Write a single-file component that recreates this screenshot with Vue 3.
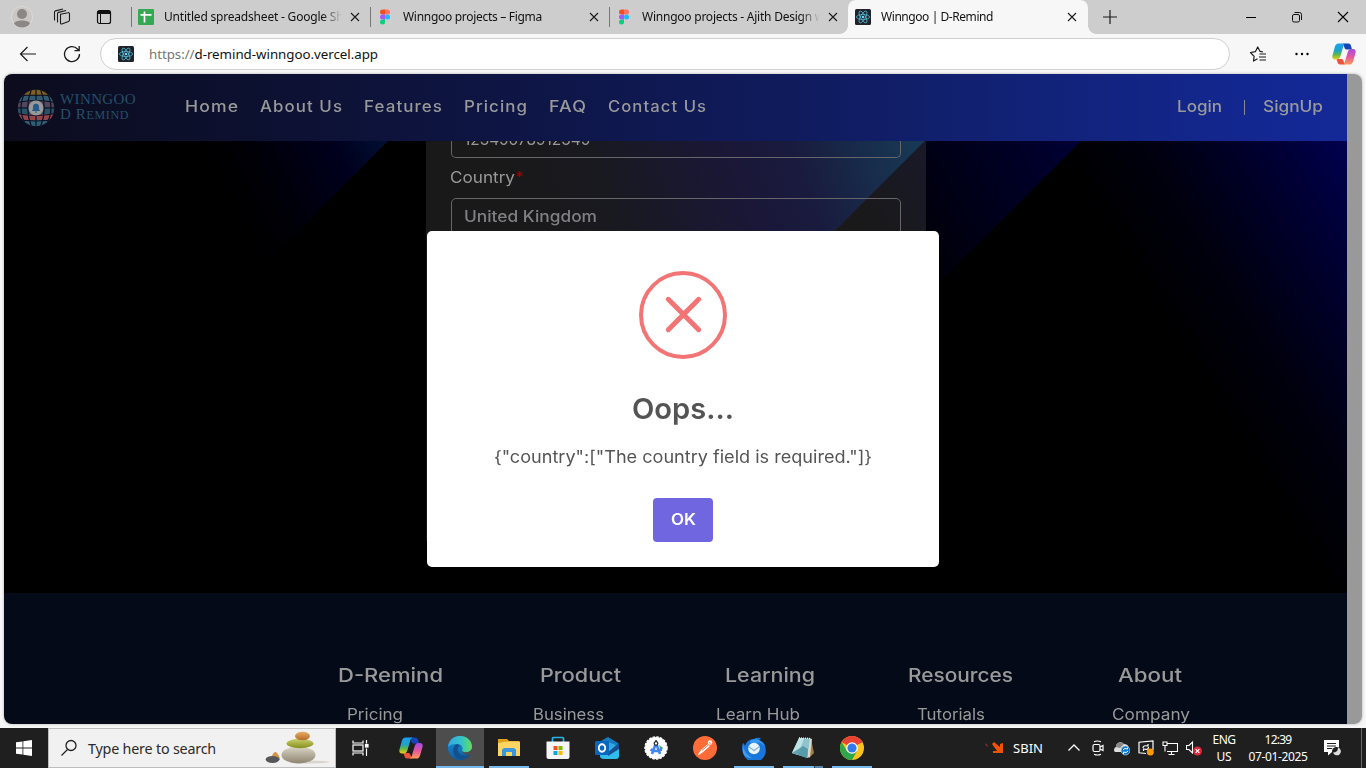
<script setup>
// Adjusts letter spacing so that a label takes the given width in pixels.
const vFit = {
  mounted(el, { value }) {
    const width = el.getBoundingClientRect().width
    const count = el.textContent.length
    el.style.letterSpacing = (value - width) / count + 'px'
  },
}

// Widens the letters themselves, keeping the spacing set in the stylesheet.
const vStretch = {
  mounted(el, { value }) {
    const spacing = parseFloat(getComputedStyle(el).letterSpacing) || 0
    const width = el.getBoundingClientRect().width - spacing
    el.style.width = value + 'px'
    el.style.transform = `scaleX(${value / width})`
  },
}

const tabs = [
  { title: 'Untitled spreadsheet - Google She', width: 186, icon: 'sheets' },
  { title: 'Winngoo projects – Figma', width: 139, icon: 'figma' },
  { title: 'Winngoo projects - Ajith Design w', width: 182, icon: 'figma' },
]

const links = [
  { text: 'Home', width: 53 },
  { text: 'About Us', width: 82 },
  { text: 'Features', width: 78 },
  { text: 'Pricing', width: 63 },
  { text: 'FAQ', width: 37 },
  { text: 'Contact Us', width: 98 },
]

const headings = [
  { text: 'D-Remind', width: 105 },
  { text: 'Product', width: 81 },
  { text: 'Learning', width: 90 },
  { text: 'Resources', width: 105 },
  { text: 'About', width: 64 },
]

const entries = [
  { text: 'Pricing', width: 56 },
  { text: 'Business', width: 71 },
  { text: 'Learn Hub', width: 84 },
  { text: 'Tutorials', width: 68 },
  { text: 'Company', width: 78 },
]
</script>

<template>
  <div class="screen">
    <svg class="defs" width="0" height="0">
      <defs>
        <linearGradient id="copA" x1="0" y1="0" x2="0" y2="1">
          <stop offset="0" stop-color="#1c9df0" /><stop offset=".45" stop-color="#1fa3c8" /><stop offset=".7" stop-color="#5fb944" /><stop offset="1" stop-color="#f3cf1d" />
        </linearGradient>
        <linearGradient id="copB" x1="0" y1="0" x2="0" y2="1">
          <stop offset="0" stop-color="#a34ce8" /><stop offset=".5" stop-color="#e5569f" /><stop offset="1" stop-color="#ff9b54" />
        </linearGradient>
        <symbol id="copilot" viewBox="0 0 24 24">
          <path d="M11 1.500h5.500c1.300 0 2 .8 2.400 2L20 7.500h-5c-1.500 0-2.200-.5-2.600-2z" fill="#1745b8" />
          <path d="M13 22.500H8c-1.400 0-2-.8-2.400-2L4.400 17H9c1.500 0 2 .5 2.500 2z" fill="#f0533c" />
          <path d="M6.500 1.500h7.200c-1.500.4-2 1.600-2.500 3.200L8.500 14c-.7 2.300-1.600 3.500-4 3.500H3C.7 17.500-.1 16 .5 13.600l2.300-8.500C3.500 2.700 4.500 1.500 6.500 1.500z" fill="url(#copA)" />
          <path d="M17.500 22.500h-7c1.500-.4 2-1.600 2.500-3.200l2.600-8.800c.7-2.400 1.600-3.500 4-3.500H21c2.300 0 3.100 1.500 2.500 3.900l-2.300 8c-.7 2.400-1.700 3.600-3.700 3.600z" fill="url(#copB)" />
        </symbol>
        <symbol id="react" viewBox="0 0 16 16">
          <rect width="16" height="16" rx="1.500" fill="#20232a" />
          <g fill="none" stroke="#53b9d6" stroke-width=".8">
            <ellipse cx="8" cy="8" rx="6.600" ry="2.500" />
            <ellipse cx="8" cy="8" rx="6.600" ry="2.500" transform="rotate(60 8 8)" />
            <ellipse cx="8" cy="8" rx="6.600" ry="2.500" transform="rotate(120 8 8)" />
          </g>
          <circle cx="8" cy="8" r="1.300" fill="#61dafb" />
        </symbol>
        <symbol id="figma" viewBox="0 0 16 16">
          <path d="M5.500.5H8v5H5.500a2.500 2.500 0 0 1 0-5z" fill="#f24e1e" />
          <path d="M8 .5h2.500a2.500 2.500 0 0 1 0 5H8z" fill="#ff7262" />
          <path d="M5.500 5.500H8v5H5.500a2.500 2.500 0 0 1 0-5z" fill="#a259ff" />
          <circle cx="10.500" cy="8" r="2.500" fill="#1abcfe" />
          <path d="M5.500 10.500H8V13a2.500 2.500 0 1 1-2.500-2.500z" fill="#0acf83" />
        </symbol>
        <symbol id="sheets" viewBox="0 0 16 16">
          <rect width="16" height="16" rx="1" fill="#34a853" />
          <path d="M2.500 5.800h11M6.500 2.500v11" stroke="#fff" stroke-width="1.700" />
        </symbol>
        <symbol id="close" viewBox="0 0 10 10">
          <path d="M1 1l8 8M9 1L1 9" stroke="#1b1b1b" stroke-width="1.100" />
        </symbol>
      </defs>
    </svg>

    <header class="tabbar">
      <div class="tools">
        <svg class="avatar" viewBox="0 0 22 22"><circle cx="11" cy="11" r="10.500" fill="#c9c6c3" stroke="#dedbd6" /><circle cx="11" cy="8" r="5" fill="#8b8785" /><path d="M3 17.500C4 13.500 18 13.500 19 17.500a10 10 0 0 1-16 0z" fill="#8b8785" /></svg>
        <svg class="spaces" viewBox="0 0 18 18" fill="none" stroke="#1b1b1b" stroke-width="1.100" stroke-linejoin="round"><path d="M7.500 6.300l7.500-1.600c.8-.2 1.500.3 1.500 1.100v6.300c0 .7-.3 1.100-1 1.300l-6.700 2.500c-.8.300-1.300-.2-1.300-.9V7.300z" /><path d="M5 14.200c-.4-.2-.5-.3-.5-.7V5.800c0-.8.300-1.200 1-1.400L13 2.500M2 12.200c-.4-.2-.5-.3-.5-.7V4.300c0-.8.300-1.200 1-1.400L10 1" /></svg>
        <svg class="vtabs" viewBox="0 0 16 16"><rect x="1.500" y="1.500" width="13" height="13" rx="2" fill="none" stroke="#111" stroke-width="1.200" /><path d="M1.500 5V3.500a2 2 0 0 1 2-2h9a2 2 0 0 1 2 2V5z" fill="#111" /><path d="M4.500 5v9" stroke="#111" /></svg>
      </div>
      <div v-for="tab in tabs" :key="tab.title" class="tab">
        <svg class="favicon"><use :href="'#' + tab.icon" /></svg>
        <div class="title"><span v-fit="tab.width" class="label">{{ tab.title }}</span></div>
        <svg class="x"><use href="#close" /></svg>
      </div>
      <div class="tab active">
        <svg class="favicon"><use href="#react" /></svg>
        <div class="title"><span v-fit="112" class="label">Winngoo | D-Remind</span></div>
        <svg class="x"><use href="#close" /></svg>
      </div>
      <svg class="plus" viewBox="0 0 14 14"><path d="M7 0v14M0 7h14" stroke="#1b1b1b" stroke-width="1.200" /></svg>
      <div class="controls">
        <svg width="12" height="12" viewBox="0 0 12 12"><path d="M1 6.500h10" stroke="#000" /></svg>
        <svg width="12" height="12" viewBox="0 0 12 12" fill="none" stroke="#111"><rect x="1.500" y="3.500" width="7" height="7.500" rx="1.500" /><path d="M3.500 1.500H8.500a2 2 0 0 1 2 2V9" /></svg>
        <svg width="12" height="12" viewBox="0 0 12 12"><path d="M1 1l10 10M11 1L1 11" stroke="#000" stroke-width="1.100" /></svg>
      </div>
    </header>

    <div class="toolbar">
      <svg class="back" viewBox="0 0 18 18" fill="none" stroke="#1b1b1b" stroke-width="1.200"><path d="M17 9H2M8.500 2L1.500 9l7 7" /></svg>
      <svg class="reload" viewBox="0 0 18 18" fill="none" stroke="#1b1b1b" stroke-width="1.300"><path d="M16.500 9A7.500 7.500 0 1 1 14.500 4L16 5.500M16.200 1v4.700h-4.700" /></svg>
      <div class="address">
        <svg class="favicon"><use href="#react" /></svg>
        <div class="url"><span v-fit="45.5" class="label scheme">https://</span><span v-fit="183.5" class="label">d-remind-winngoo.vercel.app</span></div>
      </div>
      <svg class="star" viewBox="0 0 18 18" fill="none" stroke="#1b1b1b" stroke-width="1.200" stroke-linejoin="round"><path d="M8.500 13.700L4.500 16l.6-4.600L1.500 7.500l5-.9L8.700 2l2.300 4.300 3 .7M10.500 9h6.500M10 12h7M10.500 15H17" /></svg>
      <svg class="more" viewBox="0 0 16 4"><circle cx="2.500" cy="2" r="1.200" /><circle cx="8" cy="2" r="1.200" /><circle cx="13.500" cy="2" r="1.200" /></svg>
      <svg class="copilot"><use href="#copilot" /></svg>
    </div>

    <main class="viewport">
      <div class="page">
        <nav class="navbar">
          <svg class="globe" viewBox="0 0 38 38">
            <defs><clipPath id="ball"><circle cx="19" cy="19" r="18.200" /></clipPath></defs>
            <g clip-path="url(#ball)">
              <path d="M0 0h38v6.500H0z" fill="#7d6120" />
              <path d="M0 6.500h38V12H0z" fill="#315a6e" />
              <path d="M0 12h38v6.500H0z" fill="#51465a" />
              <path d="M0 18.500h38V25H0z" fill="#2b5164" />
              <path d="M0 25h38v6H0z" fill="#93474a" />
              <path d="M0 31h38v7H0z" fill="#315e72" />
              <g fill="none" stroke="#0c0e25" stroke-width="1.200"><path d="M19 0v38M14.500 0Q7 19 14.500 38M23.500 0Q31 19 23.500 38M10 0Q-2 19 10 38M28 0Q40 19 28 38M0 7.500Q19 4.500 38 7.500M0 13.500Q19 9.500 38 13.500M0 19h38M0 24.500Q19 28.500 38 24.500M0 30.500Q19 33.500 38 30.500" /></g>
            </g>
            <circle cx="19" cy="19" r="7.500" fill="#999" />
            <path d="M15.500 21.500c1-1 1-2 1-4a2.500 2.500 0 0 1 5 0c0 2 0 3 1 4zM18 23h2" fill="#235c87" stroke="#235c87" />
          </svg>
          <div class="brand"><span v-fit="76" class="label">WINNGOO</span><span v-fit="69" class="label small">D R<small>EMIND</small></span></div>
          <div class="links"><div v-for="link in links" :key="link.text"><a v-stretch="link.width" class="label spaced">{{ link.text }}</a></div></div>
          <div class="auth"><a v-stretch="45" class="label">Login</a><i></i><a v-stretch="60" class="label">SignUp</a></div>
        </nav>

        <section class="hero">
          <svg class="beams" viewBox="0 0 1343 452">
            <defs>
              <linearGradient id="b1" gradientUnits="userSpaceOnUse" x1="222" y1="70" x2="384" y2="-11"><stop offset="0" stop-color="#000" /><stop offset=".25" stop-color="#000006" /><stop offset=".7" stop-color="#00001e" /><stop offset="1" stop-color="#001236" /></linearGradient>
              <linearGradient id="b2" gradientUnits="userSpaceOnUse" x1="850" y1="130" x2="1080" y2="0"><stop offset="0" stop-color="#000" /><stop offset=".3" stop-color="#00000b" /><stop offset="1" stop-color="#000035" /></linearGradient>
              <linearGradient id="b3" gradientUnits="userSpaceOnUse" x1="1097" y1="85" x2="1322" y2="-53"><stop offset="0" stop-color="#000" /><stop offset=".3" stop-color="#00000e" /><stop offset=".7" stop-color="#000033" /><stop offset="1" stop-color="#000054" /></linearGradient>
            </defs>
            <path d="M150 0H384L280 104L150 230z" fill="url(#b1)" />
            <path d="M1077 0H1343V452H900V177z" fill="url(#b3)" />
            <path d="M800 0H1077L860 217H800z" fill="url(#b2)" />
          </svg>
          <div class="card">
            <svg class="beams" viewBox="0 0 500 400">
              <defs>
                <linearGradient id="c1" gradientUnits="userSpaceOnUse" x1="90" y1="110" x2="475" y2="-30"><stop offset="0" stop-color="#191919" /><stop offset=".25" stop-color="#191920" /><stop offset=".58" stop-color="#1a1738" /><stop offset=".72" stop-color="#191b3e" /><stop offset="1" stop-color="#173854" /></linearGradient>
                <linearGradient id="c2" gradientUnits="userSpaceOnUse" x1="430" y1="80" x2="500" y2="30"><stop offset="0" stop-color="#191919" /><stop offset="1" stop-color="#191927" /></linearGradient>
              </defs>
              <path d="M0 0H499L380 119H0z" fill="url(#c1)" />
              <path d="M499 0H500V400H380V119z" fill="url(#c2)" />
            </svg>
            <div class="field number"><span v-stretch="126" class="label">12345678912345</span></div>
            <div class="caption"><span v-stretch="65" class="label">Country</span><b>*</b></div>
            <div class="field country"><span v-stretch="133" class="label">United Kingdom</span></div>
          </div>
        </section>

        <footer class="footer">
          <div class="headings"><div v-for="item in headings" :key="item.text"><span v-stretch="item.width" class="label">{{ item.text }}</span></div></div>
          <div class="entries"><div v-for="item in entries" :key="item.text"><span v-stretch="item.width" class="label">{{ item.text }}</span></div></div>
        </footer>
      </div>
      <div class="scrollbar"></div>

      <div class="modal">
        <svg class="error" viewBox="0 0 88 88" fill="none" stroke="#f27474"><circle cx="44" cy="44" r="42" stroke-width="4" /><path d="M29.300 28.300L59.700 58.700M59.700 28.300L29.300 58.700" stroke-width="5" stroke-linecap="round" /></svg>
        <h2><span v-stretch="102" class="label">Oops...</span></h2>
        <p><span v-stretch="378" class="label">{"country":["The country field is required."]}</span></p>
        <button><span v-stretch="25" class="label">OK</span></button>
      </div>
    </main>

    <footer class="taskbar">
      <div class="cell start"><svg width="16" height="16" viewBox="0 0 16 16" fill="#fff"><path d="M0 2.300L6.500 1.400V7.600H0zM7.300 1.300L16 0V7.600H7.300zM0 8.400H6.500V14.600L0 13.700zM7.300 8.400H16V16L7.300 14.700z" /></svg></div>
      <div class="search">
        <svg class="lens" viewBox="0 0 18 18" fill="none" stroke="#222" stroke-width="1.300"><circle cx="11" cy="6.500" r="5" /><path d="M7.500 10.500L1.500 16.500" /></svg>
        <span v-fit="128" class="label">Type here to search</span>
        <svg class="stones" viewBox="0 0 66 34">
          <defs>
            <linearGradient id="s1" x1="0" y1="0" x2="0" y2="1"><stop offset="0" stop-color="#dcd6c5" /><stop offset="1" stop-color="#8d8370" /></linearGradient>
            <linearGradient id="s2" x1="0" y1="0" x2="0" y2="1"><stop offset="0" stop-color="#cbd070" /><stop offset="1" stop-color="#858e18" /></linearGradient>
            <linearGradient id="s3" x1="0" y1="0" x2="0" y2="1"><stop offset="0" stop-color="#e9ad65" /><stop offset="1" stop-color="#b66b25" /></linearGradient>
          </defs>
          <ellipse cx="44" cy="31" rx="20" ry="1.500" fill="#d8d3cd" />
          <path d="M6 28Q8 20 11 21Q15 25 15 29z" fill="#d59543" /><ellipse cx="7.500" cy="28.500" rx="6.800" ry="3.400" fill="#55565a" />
          <ellipse cx="33.500" cy="24" rx="17" ry="8.500" fill="url(#s1)" /><ellipse cx="35" cy="12.500" rx="13.500" ry="4.700" fill="url(#s2)" /><ellipse cx="37.500" cy="5" rx="7.500" ry="4.300" fill="url(#s3)" />
        </svg>
      </div>
      <div class="apps">
        <div class="cell view"><svg width="17" height="16" viewBox="0 0 17 16" fill="none" stroke="#fff" stroke-width="1.200"><path d="M1 .5V3H11V.5M1 15.500V13H11V15.500M14.500 0V3.500M14.500 8.500V16" /><rect x="1" y="5" width="10" height="6" /><rect x="13.500" y="4.500" width="2.500" height="2.500" fill="#fff" /></svg></div>
        <div class="cell"><svg width="24" height="24"><use href="#copilot" /></svg></div>
        <div class="cell current">
          <svg width="24" height="24" viewBox="0 0 24 24">
            <defs><linearGradient id="e1"><stop offset="0" stop-color="#31a9e8" /><stop offset=".6" stop-color="#35c5c3" /><stop offset="1" stop-color="#66df52" /></linearGradient><linearGradient id="e2" x1="0" y1="0" x2="0" y2="1"><stop offset="0" stop-color="#1e97d8" /><stop offset="1" stop-color="#0c59a4" /></linearGradient></defs>
            <circle cx="12" cy="12" r="12" fill="url(#e2)" />
            <path d="M0 11C.5 4.500 5.500 0 12 0c7 0 12 5 12 10.500 0 4-3 6-6.500 6-3 0-4-1-3.500-2 2-3-.5-6.500-5-6.500C4.500 8 1 9 0 11z" fill="url(#e1)" />
            <path d="M9 8c-5 2-5 9-1 13 3 3 8 3.500 12.500 0 2-1.500 2.500-3 1.500-2.500-6 2.500-11 0-12-3-1-2.500.5-5 2-5.500C11 9 10 8 9 8z" fill="#12518c" />
            <path d="M14 14.500c1 2 5 2.500 8 .5l2-2v4l-2 1.700c-4 1-8-1-8-4.200z" fill="#4d4d4d" />
          </svg>
        </div>
        <div class="cell open"><svg width="22" height="20" viewBox="0 0 22 20"><path d="M0 1h9l2 2h10v5H0z" fill="#dca01b" /><path d="M0 5l9-1.500H22V18H0z" fill="#ffd562" /><path d="M4 18v-6.500L6 10h10l2 1.500V18h-4v-4H8v4z" fill="#3a96df" /></svg></div>
        <div class="cell"><svg width="24" height="24" viewBox="0 0 24 24"><path d="M6.500 7V2.500Q6.500 1.500 7.500 1.500H16.500Q17.500 1.500 17.500 2.500V7" fill="none" stroke="#27b5e9" stroke-width="1.700" /><path d="M.5 5.500H23.500V21a2 2 0 0 1-2 2h-19a2 2 0 0 1-2-2z" fill="#f5f5f5" /><path d="M7.500 10h4v4h-4z" fill="#f25022" /><path d="M12.500 10h4v4h-4z" fill="#7fba00" /><path d="M7.500 15h4v4h-4z" fill="#00a4ef" /><path d="M12.500 15h4v4h-4z" fill="#ffb900" /></svg></div>
        <div class="cell"><svg width="24" height="24" viewBox="0 0 24 24"><path d="M4 6l9-5 10 6v3L12 14 4 10z" fill="#157cc2" /><path d="M10 5l11 4-9 9-6-3z" fill="#2faae0" /><path d="M5 12l8 2 11-6v12q0 3-3 3H9q-4 0-4-3z" fill="#31bdec" /><path d="M13 16l11-9v6L13 20z" fill="#144f94" /><rect y="5" width="14" height="14" rx="1.500" fill="#0868bd" /><ellipse cx="7" cy="12" rx="3.200" ry="3.700" fill="none" stroke="#fff" stroke-width="1.900" /></svg></div>
        <div class="cell"><svg width="24" height="24" viewBox="0 0 24 24"><circle cx="12" cy="12" r="11" fill="#fff" stroke="#fff" stroke-width="1.500" stroke-dasharray="2.500 1.200" /><path d="M15 9l4 3-2 3z" fill="#35a852" /><path d="M12 7L8 18M12 7l4 11M6.500 13.500q5.500 3 11 0" stroke="#4285f4" stroke-width="2.600" fill="none" /><circle cx="12" cy="7.500" r="1.800" fill="#fff" stroke="#263238" stroke-width="1.300" /><path d="M12 4v2" stroke="#263238" stroke-width="1.500" /></svg></div>
        <div class="cell"><svg width="24" height="24" viewBox="0 0 24 24"><circle cx="12" cy="12" r="12" fill="#ff6c37" /><circle cx="17" cy="6.500" r="2.200" fill="#fff" /><path d="M15.500 8L8 14.500 5.500 18.500 9.500 16l7-6" fill="#fff" stroke="#fff" stroke-linejoin="round" /><path d="M9 14.500l7-6M16 6.500l2 1" stroke="#d55328" stroke-width=".7" /></svg></div>
        <div class="cell open"><svg width="24" height="24" viewBox="0 0 24 24"><path d="M1 7q1 0 2 3Q5 3 12 3q2-2 7-1l-2 2q6 2 6.500 8A11.500 11.500 0 0 1 1 17Q-1 12 1 7z" fill="#1976db" /><path d="M9 4q10-3 14 7-4-5-8-5l3 2q-5-2-10-1z" fill="#3699f6" /><path d="M1 9q1 9 9 13Q3 22 1 17z" fill="#4b9eea" /><circle cx="12" cy="12.500" r="5.800" fill="#e8f4ff" /><path d="M6.500 10.500L12 14.500l5.500-4" fill="none" stroke="#92b8de" stroke-width="1.500" /></svg></div>
        <div class="cell open split"><svg width="24" height="24" viewBox="0 0 24 24"><path d="M20 3l3 14-5 5z" fill="#a37d46" /><path d="M18 2l3 1-2 18-3 1z" fill="#dcd9cc" /><path d="M8 2l11 .5L16 22 1 17z" fill="#8ec4ce" /><path d="M8 2l5 .2L7 19l-6-2z" fill="#bfe3e5" /><path d="M12 10l5 3-1 9-15-5z" fill="#448d9e" opacity=".75" /><path d="M8 2l11 .5" stroke="#eee" stroke-width="1.500" stroke-dasharray="1 1" /></svg></div>
        <div class="cell open"><svg width="24" height="24" viewBox="0 0 24 24"><circle cx="12" cy="12" r="12" fill="#fcc31b" /><path d="M12 12L1.600 6a12 12 0 0 1 20.800 0z" fill="#ea4335" /><path d="M1.600 6L7.200 15.500 12 17.500 12 24A12 12 0 0 1 1.600 6z" fill="#30a64a" /><path d="M12 24l5-9-5 2-3 6.500z" fill="#30a64a" /><path d="M12 6.500h10.700L21 4H8z" fill="#ea4335" /><circle cx="12" cy="12" r="5.800" fill="#fff" /><circle cx="12" cy="12" r="4.600" fill="#3478ec" /></svg></div>
      </div>
      <div class="tray">
        <svg class="stock" viewBox="0 0 20 12"><path d="M1 1l3 2v2L1 3z" fill="#82231c" /><path d="M8 2l2-2 6 5V2l3-1v10H9V9h4z" fill="#ec5308" /></svg>
        <span v-fit="30" class="label sbin">SBIN</span>
        <svg class="t caret" viewBox="0 0 16 16" fill="none" stroke="#fff" stroke-width="1.300"><path d="M2.500 10.500L8 5l5.500 5.500" /></svg>
        <svg class="t" viewBox="0 0 16 16" fill="none" stroke="#fff" stroke-width="1.200"><rect x="3" y="4.500" width="7" height="7" rx="1.500" /><path d="M10 7l3-1.500v5L10 9M4 1.800Q7.500.2 11 1.800M4 14.200Q7.500 15.800 11 14.200" /></svg>
        <svg class="t" viewBox="0 0 16 16"><path d="M1 12a3 3 0 0 1 1-5 4.500 4.500 0 0 1 8-3q4 0 5 4v4z" fill="#ddd" /><path d="M2 7a4.500 4.500 0 0 1 8-3L6 8z" fill="#888" /><circle cx="11.500" cy="10.500" r="4.500" fill="#0876cb" stroke="#ddd" stroke-width=".6" /><path d="M9 10q1.500-2.500 4.500-1V7.500M14 11q-1.500 2.500-4.500 1V14" fill="none" stroke="#fff" /></svg>
        <svg class="t" viewBox="0 0 16 16" fill="none" stroke="#fff" stroke-width="1.200"><path d="M8 13.500L1 12.800V2.200L15 1v9M5 8q0-3 5-2V4M10.500 7q0 3.500-5 2V11" /><circle cx="12.300" cy="12" r="3.500" fill="#ff9b0b" stroke="none" /></svg>
        <svg class="t" viewBox="0 0 16 16" fill="none" stroke="#fff" stroke-width="1.100"><path d="M5 3.500h10.500v8H5M3 5.500v6M9.500 11.500V14M6.500 14.500h6M1 2h4v3.500H1z" /></svg>
        <svg class="t" viewBox="0 0 16 16"><path d="M.5 5.500H3l3.500-3.500v11L3 9.500H.500z" fill="none" stroke="#fff" stroke-width="1.100" /><circle cx="11.500" cy="11" r="4.500" fill="#df263a" /><path d="M9.700 9.200l3.600 3.600M13.300 9.200L9.700 12.800" stroke="#fff" stroke-width="1.200" /></svg>
        <div class="lang"><span v-fit="23" class="label">ENG</span><span v-fit="15" class="label">US</span></div>
        <div class="clock"><span v-fit="27" class="label">12:39</span><span v-fit="59" class="label">07-01-2025</span></div>
        <svg class="note" viewBox="0 0 18 18"><path d="M1 1h15v12H9l-4 3.500V13H1z" fill="#fff" /><path d="M4 4.500h9M4 7h9M4 9.500h5" stroke="#1f1f1f" /><circle cx="13.500" cy="12.500" r="4.500" fill="#1f1f1f" /><path d="M15 8.500a4 4 0 1 1-5 5q5 0 5-5z" fill="#ddd" /></svg>
        <i class="peek"></i>
      </div>
    </footer>
  </div>
</template>

<style>
body { margin: 0; overflow: hidden; }
</style>

<style scoped>
* { box-sizing: border-box; }
svg { display: block; flex: none; }
.defs { position: absolute; }
.label { display: inline-block; white-space: pre; transform-origin: 0 50%; text-align: left; }
.screen { width: 1366px; height: 768px; display: flex; flex-direction: column; background: #f7f7f7; overflow: hidden; font-family: "Noto Sans", "Open Sans", sans-serif; }

.tabbar { height: 34px; flex: none; background: #cdcdcd; display: flex; align-items: center; font-size: 12px; color: #111; }
.tools { width: 131px; display: flex; align-items: center; padding-left: 11px; }
.avatar { width: 22px; height: 22px; }
.spaces { width: 18px; height: 18px; margin-left: 20px; }
.vtabs { width: 16px; height: 16px; margin-left: 25px; }
.tab { width: 239px; height: 34px; display: flex; align-items: center; padding-left: 7px; position: relative; }
.tab::before { content: ""; width: 1px; height: 20px; background: #777; position: absolute; left: 0; top: 7px; }
.favicon { width: 16px; height: 16px; }
.title { margin-left: 10px; width: 178px; height: 20px; line-height: 20px; overflow: hidden; -webkit-mask-image: linear-gradient(90deg, #000 89%, transparent 100%); mask-image: linear-gradient(90deg, #000 89%, transparent 100%); }
.x { width: 10px; height: 10px; margin-left: 8px; }
.tab.active { width: 240px; background: #f7f7f7; border-radius: 8px 8px 0 0; z-index: 1; }
.tab.active::before, .tab.active::after { content: ""; position: absolute; top: auto; bottom: 0; width: 8px; height: 8px; }
.tab.active::before { left: -8px; background: radial-gradient(circle at 0 0, transparent 7.500px, #f7f7f7 8px); }
.tab.active::after { right: -8px; background: radial-gradient(circle at 100% 0, transparent 7.500px, #f7f7f7 8px); }
.plus { width: 14px; height: 14px; margin-left: 15px; }
.controls { margin-left: auto; display: flex; gap: 34px; padding-right: 17px; }

.toolbar { height: 40px; flex: none; display: flex; align-items: center; padding-left: 19px; }
.back { width: 18px; height: 18px; }
.reload { width: 18px; height: 18px; margin-left: 26px; }
.address { width: 1130px; height: 32px; margin-left: 19px; border: 1px solid #d0d0d0; border-radius: 16px; background: #fff; display: flex; align-items: center; padding-left: 17px; }
.url { font-size: 13.300px; line-height: 20px; margin-left: 15px; color: #111; white-space: nowrap; }
.scheme { color: #747474; }
.star { width: 18px; height: 18px; margin-left: 19px; }
.more { width: 16px; height: 4px; margin-left: 27px; }
.copilot { width: 24px; height: 24px; margin-left: 22px; }

.viewport { width: 1358px; height: 650px; flex: none; margin-left: 4px; display: flex; border-radius: 8px; overflow: hidden; position: relative; box-shadow: 0 0 3px #aaa; }
.page { width: 1343px; display: flex; flex-direction: column; font-family: Inter, sans-serif; color: #999; }
.scrollbar { width: 15px; background: #999; }
.navbar { height: 67px; flex: none; display: flex; align-items: center; padding-left: 13px; background: linear-gradient(90deg, #0c0c1d 0, #0d133b 29%, #101b5c 58%, #11206f 71%, #132791 93%, #142897 100%); font-size: 15.500px; font-weight: 500; }
.globe { width: 38px; height: 38px; }
.brand { width: 77px; margin-left: 5px; display: flex; flex-direction: column; align-items: flex-start; font-family: "Liberation Serif", serif; font-size: 15px; line-height: 15px; color: #24506a; font-weight: 400; }
.small { font-size: 15px; }
.small small { font-size: 12px; }
.spaced { letter-spacing: 1px; }
.links { margin-left: 48px; display: grid; grid-template-columns: 75px 104px 100px 85px 59px 100px; line-height: 20px; margin-top: -1px; }
.auth { margin: -1px 24px 0 auto; display: flex; align-items: center; line-height: 20px; }
.auth i { width: 1px; height: 15px; background: #858998; margin: 0 18px 0 22px; }
.hero { height: 452px; flex: none; background: #000; position: relative; overflow: hidden; padding-left: 422px; }
.beams { position: absolute; left: 0; top: 0; width: 100%; height: 100%; }
.card { width: 500px; height: 400px; position: relative; padding: 0 25px; background: #191919; overflow: hidden; }
.field { position: relative; width: 450px; border: 1px solid #66666a; padding-left: 12px; font-size: 16px; font-weight: 500; }
.number { height: 17px; border-top: 0; border-radius: 0 0 5px 5px; font-weight: 400; display: flex; align-items: flex-end; line-height: 20px; padding-bottom: 8px; }
.caption { position: relative; height: 40px; line-height: 40px; font-size: 15.500px; margin-left: -1px; }
.caption b { color: #990000; font-weight: 500; }
.country { height: 44px; border-radius: 5px; line-height: 36px; color: #808084; font-size: 15.500px; }
.footer { height: 131px; background: #050a18; overflow: hidden; }
.headings, .entries { display: grid; }
.headings { grid-template-columns: 202px 185px 183px 210px 120px; padding: 68px 0 0 334px; font-size: 19.300px; font-weight: 500; line-height: 28px; }
.entries { grid-template-columns: 186px 183px 201px 195px 120px; padding: 16px 0 0 343px; font-size: 15.500px; line-height: 20px; }

.modal { position: absolute; left: 423px; top: 157px; width: 512px; height: 336px; border-radius: 5px; background: #fff; display: flex; flex-direction: column; align-items: center; font-family: Inter, sans-serif; color: #545454; }
.error { width: 88px; height: 88px; margin-top: 40px; }
.modal h2 { margin: 31px 0 0; font-size: 29px; line-height: 38px; font-weight: 600; }
.modal p { margin: 16px 0 0; font-size: 17.300px; line-height: 26px; font-weight: 400; }
.modal button { width: 60px; height: 44px; margin-top: 28px; border: 0; padding: 0 0 1px; border-radius: 4px; background: #7066e0; color: #fff; font: 600 15.500px Inter, sans-serif; }

.taskbar { margin-top: auto; height: 40px; flex: none; display: flex; background: #1f1f1f; color: #fff; }
.cell { width: 48px; height: 40px; display: flex; align-items: center; justify-content: center; position: relative; }
.search { width: 288px; height: 40px; background: #f1f1f1; border: 1px solid #bdbdbd; display: flex; align-items: center; padding-left: 11px; color: #2b2b2b; font-size: 14.300px; }
.lens { width: 18px; height: 18px; margin-right: 10px; }
.stones { width: 66px; height: 34px; margin-left: 49px; }
.apps { display: flex; gap: 1px; }
.view { margin-right: 2px; }
.current { background: #4d4d4d; }
.current::after, .open::after { content: ""; position: absolute; bottom: 0; height: 2px; background: #76b9ed; left: 4px; width: 40px; }
.current::after { left: 0; width: 48px; }
.split::after { background: linear-gradient(90deg, #76b9ed 31px, #263b4b 31px, #263b4b 32px, #5985aa 32px); }
.tray { margin-left: auto; display: flex; align-items: center; font-size: 12px; }
.stock { width: 20px; height: 12px; margin-right: 9px; }
.sbin { font-size: 13px; margin-right: 23px; }
.t { width: 16px; height: 16px; margin-right: 8px; }
.lang, .clock { display: flex; flex-direction: column; align-items: center; line-height: 17px; }
.lang { margin-left: 2px; width: 24px; }
.clock { margin-left: 12px; width: 60px; }
.note { width: 18px; height: 18px; margin: 0 20px 0 15px; }
.peek { width: 1px; height: 40px; background: #666; margin-right: 4px; }
.tray .t:nth-of-type(n) { position: relative; }
.stock { margin-left: 0; }
.apps + .tray { margin-right: 0; }
.clock + .note { margin-right: 20px; }
</style>
